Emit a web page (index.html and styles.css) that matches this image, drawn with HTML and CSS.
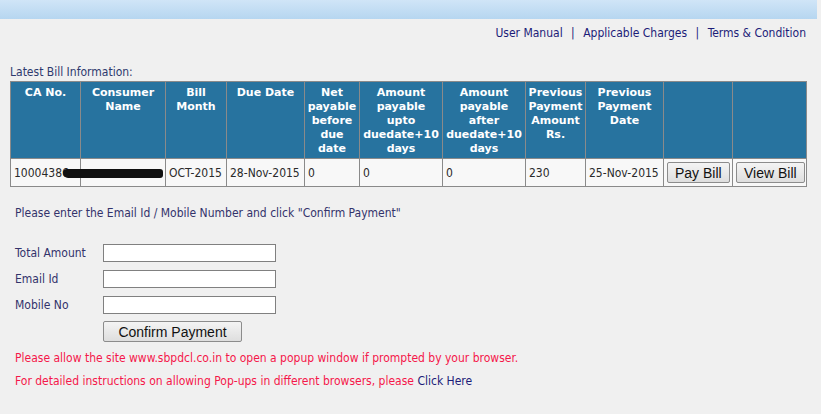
FILE: index.html
```html
<!DOCTYPE html>
<html>
<head>
  <title>Bill Payment</title>
  <link rel="stylesheet" href="styles.css">
</head>
<body>

<div class="topbar"></div>

<div class="toplinks">
  <a href="#">User Manual</a> <span class="sep">|</span>
  <a href="#">Applicable Charges</a> <span class="sep">|</span>
  <a href="#">Terms &amp; Condition</a>
</div>

<div class="content">
  <div class="caption">Latest Bill Information:</div>

  <table class="bills">
    <thead>
      <tr>
        <th class="c-ca">CA No.</th>
        <th class="c-name">Consumer Name</th>
        <th class="c-month">Bill Month</th>
        <th class="c-due">Due Date</th>
        <th class="c-net">Net payable before due date</th>
        <th class="c-upto">Amount payable upto duedate+10 days</th>
        <th class="c-after">Amount payable after duedate+10 days</th>
        <th class="c-pamt">Previous Payment Amount Rs.</th>
        <th class="c-pdate">Previous Payment Date</th>
        <th class="c-pay"></th>
        <th class="c-view"></th>
      </tr>
    </thead>
    <tbody>
      <tr>
        <td class="ca-cell">10004386<span class="redact"></span></td>
        <td></td>
        <td>OCT-2015</td>
        <td>28-Nov-2015</td>
        <td>0</td>
        <td>0</td>
        <td>0</td>
        <td>230</td>
        <td>25-Nov-2015</td>
        <td><button class="btn">Pay Bill</button></td>
        <td><button class="btn">View Bill</button></td>
      </tr>
    </tbody>
  </table>

  <p class="hint">Please enter the Email Id / Mobile Number and click "Confirm Payment"</p>

  <div class="payform">
    <label for="total">Total Amount</label>
    <input type="text" id="total">
    <label for="email">Email Id</label>
    <input type="text" id="email">
    <label for="mobile">Mobile No</label>
    <input type="text" id="mobile">
    <span></span>
    <button class="btn confirm">Confirm Payment</button>
  </div>

  <p class="warn">Please allow the site www.sbpdcl.co.in to open a popup window if prompted by your browser.</p>
  <p class="warn">For detailed instructions on allowing Pop-ups in different browsers, please <a href="#">Click Here</a></p>
</div>

</body>
</html>
```

FILE: styles.css
```css
body {
  margin: 0;
  background-color: #f0f0f0;
  font-family: "DejaVu Sans Condensed", "DejaVu Sans", sans-serif;
  font-size: 12px;
  color: #33336b;
}

a {
  color: #1c1c78;
  text-decoration: none;
}

.topbar {
  height: 19px;
  margin-right: 4px;
  background: linear-gradient(#d0e5f7, #b6d6f0);
}

.toplinks {
  text-align: right;
  padding: 7px 15px 0 0;
  line-height: 14px;
}

.toplinks .sep {
  color: #1c1c78;
  margin: 0 5px;
}

.content {
  padding: 0 10px;
}

.caption {
  margin-top: 25px;
  line-height: 14px;
  color: #2e3a6e;
}

/* Bill table */
.bills {
  width: 796px;
  border-collapse: collapse;
  margin-top: 2px;
  table-layout: fixed;
}

.bills th, .bills td {
  border: 1px solid #8a8a8a;
}

.bills th {
  background-color: #27739f;
  color: #ffffff;
  font-family: "DejaVu Sans", sans-serif;
  font-size: 11px;
  font-weight: bold;
  text-align: center;
  vertical-align: top;
  line-height: 14px;
  padding: 4px 2px 2px;
  height: 70px;
}

.bills td {
  background-color: #f8f8f8;
  color: #2a2a2a;
  height: 27px;
  padding: 0 0 0 3px;
  white-space: nowrap;
  overflow: hidden;
}

.c-ca { width: 65px; }
.c-name { width: 80px; }
.c-month { width: 56px; }
.c-due { width: 73px; }
.c-net { width: 50px; }
.c-upto { width: 78px; }
.c-after { width: 78px; }
.c-pamt { width: 55px; }
.c-pdate { width: 73px; }
.c-pay { width: 64px; }
.c-view { width: 69px; }

.bills td.ca-cell {
  position: relative;
  overflow: visible;
}

/* scribbled-out consumer name */
.redact {
  position: absolute;
  left: 52px;
  top: 10px;
  width: 100px;
  height: 9px;
  background-color: #111;
  border-radius: 4px 3px 3px 5px;
  z-index: 1;
}

.btn {
  font-family: "Liberation Sans", Arial, sans-serif;
  font-size: 14px;
  color: #111;
  background: linear-gradient(#f4f4f4, #dedede);
  border: 1px solid #8c8c8c;
  border-radius: 2px;
  padding: 1px 7px;
  height: 21px;
  cursor: pointer;
}

.hint {
  margin: 19px 0 0 5px;
  line-height: 14px;
}

/* Payment form */
.payform {
  display: grid;
  grid-template-columns: 88px 175px;
  row-gap: 8px;
  align-items: center;
  margin: 24px 0 0 5px;
}

.payform label {
  color: #33336b;
}

.payform input {
  width: 173px;
  height: 18px;
  box-sizing: border-box;
  border: 1px solid #808080;
  background: #fff;
  padding: 1px 3px;
}

.payform .confirm {
  width: 139px;
  height: 21px;
  margin-top: -1px;
}

.warn {
  color: #f5174a;
  margin: 9px 0 0 5px;
  line-height: 14px;
}

.warn + .warn {
  margin-top: 9px;
}
```
